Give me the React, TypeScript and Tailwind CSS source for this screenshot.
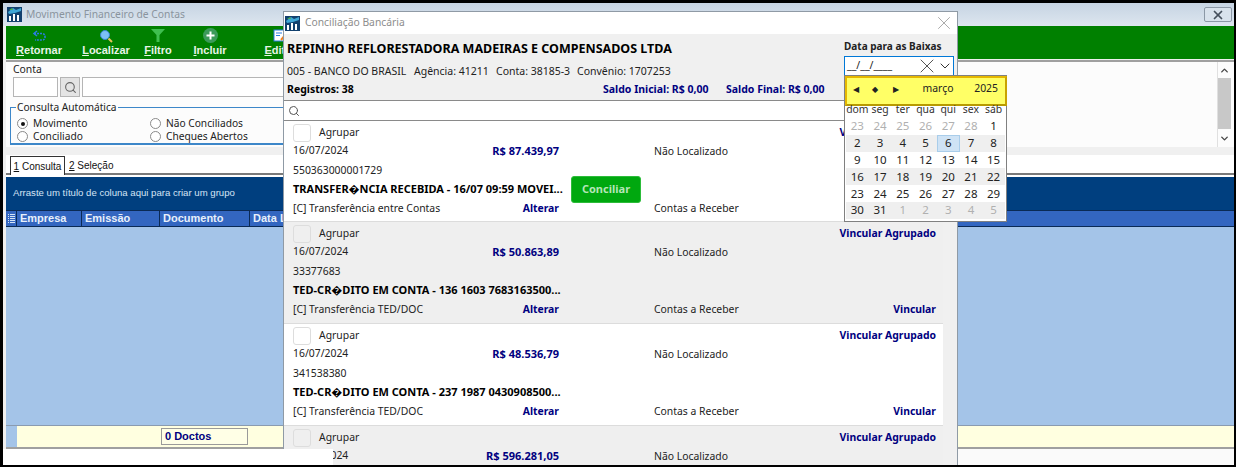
import React from 'react';
import { X, ChevronDown, ChevronUp, Search } from 'lucide-react';

const rows = [
  { date: '16/07/2024', value: 'R$ 87.439,97', doc: '550363000001729', desc: 'TRANSFER�NCIA RECEBIDA - 16/07 09:59 MOVEI...', cat: '[C] Transferência entre Contas', conciliar: true },
  { date: '16/07/2024', value: 'R$ 50.863,89', doc: '33377683', desc: 'TED-CR�DITO EM CONTA - 136 1603 7683163500...', cat: '[C] Transferência TED/DOC', conciliar: false },
  { date: '16/07/2024', value: 'R$ 48.536,79', doc: '341538380', desc: 'TED-CR�DITO EM CONTA - 237 1987 0430908500...', cat: '[C] Transferência TED/DOC', conciliar: false },
  { date: '16/07/2024', value: 'R$ 596.281,05', doc: '', desc: '', cat: '', conciliar: false },
];

const weeks = [
  [23, 24, 25, 26, 27, 28, 1],
  [2, 3, 4, 5, 6, 7, 8],
  [9, 10, 11, 12, 13, 14, 15],
  [16, 17, 18, 19, 20, 21, 22],
  [23, 24, 25, 26, 27, 28, 29],
  [30, 31, 1, 2, 3, 4, 5],
];

const AppIcon = () => (
  <svg width="15" height="15" viewBox="0 0 15 15" className="shrink-0">
    <rect width="15" height="15" fill="#12406e" />
    <path d="M1 5 L6 1 L9 3 L14 1 L14 4 L8 6 L2 7 Z" fill="#3fa7d6" />
    <path d="M2 3 L5 1 L6 3 Z" fill="#4caf50" />
    <rect x="2" y="9" width="2" height="5" fill="#fff" />
    <rect x="6" y="7" width="2" height="7" fill="#fff" />
    <rect x="10" y="8" width="2" height="6" fill="#fff" />
  </svg>
);

const ToolButton = ({ icon, label, width }: { icon: React.ReactNode; label: string; width: string }) => (
  <div className={`flex flex-col items-center shrink-0 ${width}`}>
    <div className="h-[15px] flex items-center justify-center">{icon}</div>
    <span className="text-[11px] leading-[14px] font-bold text-[#e8f4e8] font-['Liberation_Sans',sans-serif]">
      <span className="underline">{label[0]}</span>
      {label.slice(1)}
    </span>
  </div>
);

const Radio = ({ label, checked }: { label: string; checked?: boolean }) => (
  <div className="flex items-center gap-[5px] h-[13px]">
    <span className="w-[11px] h-[11px] rounded-full border border-[#8a8a8a] bg-white flex items-center justify-center">
      {checked && <span className="w-[4px] h-[4px] rounded-full bg-[#111]" />}
    </span>
    <span>{label}</span>
  </div>
);

const Row = ({ row, index }: { row: (typeof rows)[number]; index: number }) => (
  <div className={`shrink-0 pl-[9px] pt-[2px] text-[10.4px] text-[#222] border-b border-[#dcdcdc] ${index === 0 ? 'h-[101px]' : 'h-[102px]'} ${index % 2 ? 'bg-[#efefef]' : 'bg-white'}`}>
    <div className="grid grid-cols-[266px_95px_282px] auto-rows-[19px] items-center">
      <div className="col-span-2 flex items-center gap-[8px]">
        <span className="w-[18px] h-[18px] rounded-[3px] border border-[#dddddd] bg-transparent" />
        <span>Agrupar</span>
      </div>
      <div className="text-right font-bold text-[#000080]">Vincular Agrupado</div>
      <div className="col-start-1 row-start-2 flex justify-between">
        <span>{row.date}</span>
        <span className="font-bold text-[11px] text-[#000080]">{row.value}</span>
      </div>
      <div className="col-start-3 row-start-2">Não Localizado</div>
      {row.doc && <div className="col-start-1 row-start-3">{row.doc}</div>}
      {row.desc && <div className="col-start-1 row-start-4 text-[11px] font-bold text-black whitespace-nowrap">{row.desc}</div>}
      {row.conciliar && (
        <div className="col-start-2 row-start-4 ml-[12px] w-[70px] h-[27px] rounded-[3px] bg-[#00a80f] border border-[#2cbc3a] text-[#b4e6b8] text-[11px] font-bold flex items-center justify-center">
          Conciliar
        </div>
      )}
      {row.cat && (
        <>
          <div className="col-start-1 row-start-5 flex justify-between">
            <span>{row.cat}</span>
            <span className="font-bold text-[#000080]">Alterar</span>
          </div>
          <div className="col-start-3 row-start-5 flex justify-between">
            <span>Contas a Receber</span>
            <span className="font-bold text-[#000080]">Vincular</span>
          </div>
        </>
      )}
    </div>
  </div>
);

const Calendar = () => (
  <div className="absolute left-[844px] top-[75px] w-[163px] h-[147px] bg-white border border-[#808080] text-[10.4px] text-[#222]">
    <div className="h-[30px] -mr-[1px] bg-[#ffff66] border-2 border-[#e6b800] border-r-[#c9a200] border-b-[#b89a00] flex items-center pr-[7px] pb-[5px]">
      <span className="text-[8px] w-[17px] text-center">◀</span>
      <span className="text-[8px] w-[21px] text-center">◆</span>
      <span className="text-[8px] w-[21px] text-center">▶</span>
      <span className="ml-[7px] w-[50px] text-center">março</span>
      <span className="ml-auto">2025</span>
    </div>
    <div className="grid grid-cols-7 px-[1px] h-[6px] leading-[6px] items-center text-center text-[#333]">
      {['dom', 'seg', 'ter', 'qua', 'qui', 'sex', 'sáb'].map((d) => (
        <span key={d}>{d}</span>
      ))}
    </div>
    <div className="px-[1px] pt-[6px]">
      {weeks.map((w, i) => (
        <div key={i} className={`grid grid-cols-7 h-[16.8px] leading-[14px] items-center text-center text-[11.5px] ${i % 2 ? 'bg-[#efefef]' : ''}`}>
          {w.map((d, j) => {
            const muted = (i === 0 && d > 1) || (i === 5 && d < 10);
            const today = i === 1 && d === 6;
            return (
              <span key={j} className={`h-full flex items-center justify-center ${muted ? 'text-[#b0b0b0]' : ''} ${today ? 'bg-[#cfe3f5] border border-[#a9cdea]' : ''}`}>
                {d}
              </span>
            );
          })}
        </div>
      ))}
    </div>
  </div>
);

const Dialog = () => (
  <div className="absolute left-[283px] top-[11px] w-[675px] h-[454px] bg-[#f0f0f0] border border-[#8f9aa5] border-b-0 flex flex-col overflow-hidden">
    <div className="h-[22px] bg-white flex items-center pl-[1px] pr-[2px] shrink-0">
      <AppIcon />
      <span className="ml-[5px] text-[10.3px] text-[#8d8d8d]">Conciliação Bancária</span>
      <X size={22} strokeWidth={0.9} className="ml-auto text-[#999]" />
    </div>
    <div className="h-[66px] shrink-0 relative pl-[3px] text-[10.5px] text-[#222]">
      <div className="pt-[6px] h-[27px] text-[12.5px] leading-[18px] font-bold text-black whitespace-nowrap">REPINHO REFLORESTADORA MADEIRAS E COMPENSADOS LTDA</div>
      <div className="h-[21px] flex items-center whitespace-nowrap">
        <span className="w-[127px]">005 - BANCO DO BRASIL</span>
        <span className="w-[82px]">Agência: 41211</span>
        <span className="w-[81px]">Conta: 38185-3</span>
        <span>Convênio: 1707253</span>
      </div>
      <div className="h-[16px] flex items-center whitespace-nowrap font-bold">
        <span className="w-[316px] text-black">Registros: 38</span>
        <span className="w-[123px] text-[#000080]">Saldo Inicial: R$ 0,00</span>
        <span className="text-[#000080]">Saldo Final: R$ 0,00</span>
      </div>
      <div className="absolute left-[560px] top-[5px] text-[10px] font-bold text-[#222] whitespace-nowrap">Data para as Baixas</div>
      <div className="absolute left-[560px] top-[22px] w-[110px] h-[20px] bg-white border border-[#0078d7] flex items-center pl-[2px]">
        <span className="text-[10.5px]">__/__/____</span>
        <X size={24} strokeWidth={1} className="ml-auto -my-[2px] text-[#555]" />
        <ChevronDown size={16} strokeWidth={1.5} className="-ml-[2px] text-[#333]" />
      </div>
    </div>
    <div className="h-[21px] shrink-0 bg-white border-y border-[#8a8a8a] flex items-center pl-[4px]">
      <Search size={12} className="text-[#555]" />
    </div>
    <div className="flex-1 w-[659px] flex flex-col">
      {rows.map((r, i) => (
        <Row key={i} row={r} index={i} />
      ))}
    </div>
  </div>
);

export default function App() {
  return (
    <div className="relative w-[1236px] h-[467px] overflow-hidden bg-black pt-[3px] pb-[2px] pl-[3px] pr-[2px] font-['Noto_Sans',sans-serif]">
      <div className="h-full flex flex-col bg-[#f0f0f0]">
        <div className="h-[23px] shrink-0 bg-gradient-to-b from-[#c6d4e3] to-[#dde6ef] flex items-center pl-[4px] pr-[2px]">
          <AppIcon />
          <span className="ml-[4px] text-[10.3px] text-[#8a949e]">Movimento Financeiro de Contas</span>
          <div className="ml-auto w-[28px] h-[15px] rounded-[2px] border border-[#8b98a6] bg-[#d8e2ec] flex items-center justify-center">
            <X size={14} strokeWidth={3} className="text-[#44505c]" />
          </div>
        </div>
        <div className="ml-[3px] flex-1 flex flex-col min-h-0">
          <div className="h-[33px] shrink-0 bg-[#008000] flex items-start pt-[2px] pl-[4px]">
            <ToolButton width="w-[58px]" label="Retornar" icon={
              <svg width="14" height="12" viewBox="0 0 14 12" fill="none" stroke="#2a7de1" strokeWidth="1.6"><path d="M5 1 L2 3.5 L5 6" /><path d="M2 3.5 H10 Q13 3.5 13 7 Q13 10 10 10 H3" strokeDasharray="2 1" /></svg>
            } />
            <ToolButton width="w-[60px] ml-[8px]" label="Localizar" icon={
              <svg width="14" height="14" viewBox="0 0 14 14"><circle cx="6" cy="6" r="4.5" fill="#7cc0f5" stroke="#3a86d0" /><path d="M9.5 9.5 L13 13" stroke="#e8c35a" strokeWidth="2" /></svg>
            } />
            <ToolButton width="w-[40px] ml-[2px]" label="Filtro" icon={
              <svg width="14" height="13" viewBox="0 0 14 13"><path d="M0 0 H14 L8.5 6 V13 H5.5 V6 Z" fill="#3fbf4f" /></svg>
            } />
            <ToolButton width="w-[44px] ml-[10px]" label="Incluir" icon={
              <svg width="15" height="15" viewBox="0 0 15 15"><circle cx="7.5" cy="7.5" r="7.5" fill="#3c9a5a" /><path d="M7.5 3.5 V11.5 M3.5 7.5 H11.5" stroke="#fff" strokeWidth="2" /></svg>
            } />
            <ToolButton width="w-[44px] ml-[26px]" label="Editar" icon={
              <svg width="15" height="14" viewBox="0 0 15 14"><rect x="1" y="1" width="11" height="11" fill="#fff" stroke="#2a7de1" /><path d="M3 4 H9 M3 6.5 H7" stroke="#2a7de1" /><path d="M8 11 L14 4" stroke="#f08020" strokeWidth="2" /></svg>
            } />
          </div>
          <div className="h-[87px] shrink-0 mt-[1px] border-t-2 border-[#a0a0a0] bg-[#fcfcfc] flex text-[10.4px] text-[#222]">
            <div className="flex-1 pl-[7px]">
              <div className="h-[14px] leading-[14px]">Conta</div>
              <div className="flex gap-[2px] h-[20px] mt-[1px]">
                <span className="w-[45px] bg-white border border-[#b5b5b5]" />
                <span className="w-[20px] bg-[#e4e4e4] border border-[#b5b5b5] flex items-center justify-center"><Search size={13} className="text-[#666]" /></span>
                <span className="w-[260px] bg-white border border-[#b5b5b5]" />
              </div>
              <div className="relative mt-[10px] -ml-[3px] w-[290px] h-[38px] border border-[#3d87c9] border-b-2">
                <span className="absolute -top-[7px] left-[5px] px-[1px] bg-[#fcfcfc] leading-[13px] text-[10.2px]">Consulta Automática</span>
                <div className="grid grid-cols-[133px_1fr] pl-[6px] pt-[9px] text-[10.2px] leading-[13px]">
                  <Radio label="Movimento" checked />
                  <Radio label="Não Conciliados" />
                  <Radio label="Conciliado" />
                  <Radio label="Cheques Abertos" />
                </div>
              </div>
            </div>
            <div className="w-[14px] mr-[3px] flex flex-col items-center justify-between border-l border-[#e0e0e0] text-[#444]">
              <ChevronUp size={11} strokeWidth={3} className="mt-[3px]" />
              <div className="w-full flex-1 my-[2px] mb-[4px] bg-[#c8c8c8]" />
              <ChevronDown size={11} strokeWidth={3} className="mb-[3px]" />
            </div>
          </div>
          <div className="h-[8px] shrink-0 bg-[#f0f0f0]" />
          <div className="h-[20px] shrink-0 bg-white border-b-2 border-[#7a7a7a] flex items-end pl-[4px] text-[10px] font-['Liberation_Sans',sans-serif] text-[#111]">
            <div className="h-[19px] w-[55px] border border-b-0 border-[#333] flex items-center justify-center -mb-[2px] bg-white"><span className="underline">1</span>&nbsp;Consulta</div>
            <div className="h-[19px] ml-[4px] flex items-center -mb-[2px]"><span className="underline">2</span>&nbsp;Seleção</div>
          </div>
          <div className="h-[2px] shrink-0 bg-white" />
          <div className="h-[33px] shrink-0 bg-[#003f7f] flex items-center pl-[7px] text-[9.6px] text-[#d5e4f5] font-['Liberation_Sans',sans-serif]">
            Arraste um título de coluna aqui para criar um grupo
          </div>
          <div className="h-[17px] shrink-0 bg-[#3366c0] border-y border-[#0a2a55] flex text-[11px] font-bold text-[#e8f0fb] font-['Liberation_Sans',sans-serif] leading-[15px]">
            <span className="w-[11px] pl-[2px] border-r border-[#0a2a55] flex items-center">
              <svg width="7" height="9" viewBox="0 0 7 9" fill="#d5e4f5"><path d="M0 0h1v1H0zM2 0h5v1H2zM0 2h1v1H0zM2 2h5v1H2zM0 4h1v1H0zM2 4h5v1H2zM0 6h1v1H0zM2 6h5v1H2zM0 8h1v1H0zM2 8h5v1H2z" /></svg>
            </span>
            <span className="w-[65px] pl-[3px] border-r border-[#0a2a55]">Empresa</span>
            <span className="w-[78px] pl-[3px] border-r border-[#0a2a55]">Emissão</span>
            <span className="w-[90px] pl-[3px] border-r border-[#0a2a55]">Documento</span>
            <span className="pl-[3px]">Data Lanç</span>
          </div>
          <div className="flex-1 bg-[#a4c4e8] border-b border-[#8a9bb0]" />
          <div className="h-[23px] shrink-0 bg-[#ffffe0] border-b-2 border-[#a0a0a0] flex">
            <div className="w-[11px] bg-[#a4c4e8]" />
            <div className="ml-[144px] mt-[2px] w-[87px] h-[17px] bg-[#ffffe6] border border-[#9a9a9a] flex items-center pl-[3px] text-[11px] font-bold text-[#000080] font-['Liberation_Sans',sans-serif]">
              0 Doctos
            </div>
          </div>
          <div className="h-[16px] shrink-0 bg-[#fafafa]" />
        </div>
      </div>
      <Dialog />
      <Calendar />
      <div className="absolute left-[3px] top-[449px] w-[330px] h-[16px] bg-white" />
    </div>
  );
}
